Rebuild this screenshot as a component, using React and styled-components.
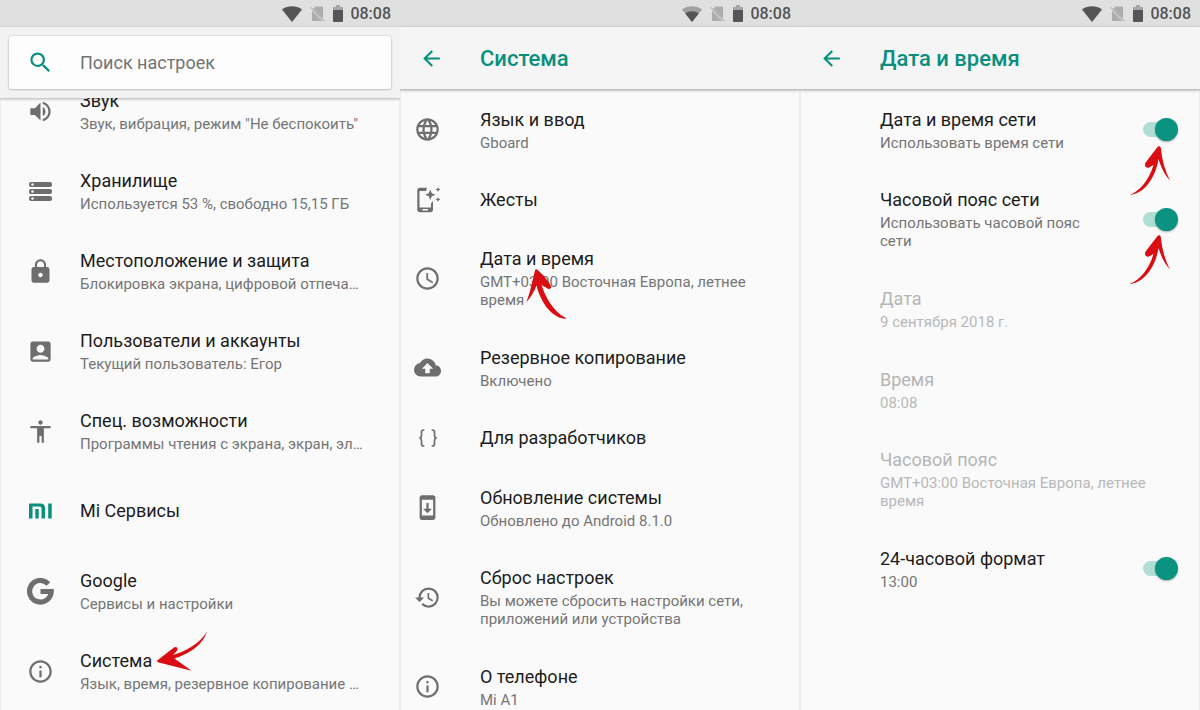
import React, { useState } from 'react';
import styled, { createGlobalStyle } from 'styled-components';
import {
  MdSearch,
  MdVolumeUp,
  MdLock,
  MdAccountBox,
  MdAccessibility,
  MdInfoOutline,
  MdArrowBack,
  MdLanguage,
  MdAccessTime,
  MdBackup,
  MdSystemUpdate,
  MdHistory,
} from 'react-icons/md';

const GlobalStyle = createGlobalStyle`
  * {
    box-sizing: border-box;
  }

  body {
    margin: 0;
    background: #fafafa;
    font-family: Roboto, "Liberation Sans", sans-serif;
  }
`;

const Screens = styled.main`
  display: grid;
  grid-template-columns: repeat(3, 1fr);
  height: 100vh;
`;

const Screen = styled.section`
  display: flex;
  flex-direction: column;
  min-width: 0;
  min-height: 0;
  overflow: hidden;
  background: #fafafa;
`;

const StatusBar = styled.div`
  display: flex;
  flex-shrink: 0;
  align-items: center;
  justify-content: flex-end;
  height: 27px;
  padding-right: 9px;
  background: #e0e0e0;
  color: #555;
`;

const StatusIcons = styled.span`
  display: flex;
  align-items: center;
  gap: 8px;
`;

const Clock = styled.time`
  margin-left: 7px;
  font-size: 16px;
  font-weight: 500;
  line-height: 27px;
`;

const SearchHeader = styled.header`
  position: relative;
  z-index: 1;
  flex-shrink: 0;
  padding: 9px;
  background: #f2f2f2;
  box-shadow: 0 1px 3px rgba(0, 0, 0, 0.3);
`;

const SearchBox = styled.label`
  display: flex;
  align-items: center;
  height: 53px;
  padding-left: 18px;
  border-radius: 2px;
  background: #fdfdfd;
  box-shadow: 0 0 2px rgba(0, 0, 0, 0.25), 0 1px 2px rgba(0, 0, 0, 0.15);
  color: #0a8f7d;
`;

const SearchInput = styled.input`
  flex: 1;
  min-width: 0;
  margin-left: 26px;
  padding: 0;
  border: none;
  outline: none;
  background: transparent;
  color: #212121;
  font-family: inherit;
  font-size: 18px;

  &::placeholder {
    color: #737373;
    opacity: 1;
  }
`;

const AppBar = styled.header`
  position: relative;
  z-index: 1;
  display: flex;
  flex-shrink: 0;
  align-items: center;
  height: 62px;
  padding-left: 19px;
  background: #f5f5f5;
  box-shadow: 0 1px 3px rgba(0, 0, 0, 0.4);
  color: #0a8f7d;
`;

const BackButton = styled.button`
  display: flex;
  width: 61px;
  padding: 0;
  border: none;
  background: none;
  color: inherit;
  cursor: pointer;
`;

const AppTitle = styled.h1`
  margin: 0;
  font-size: 22px;
  font-weight: 500;
`;

const List = styled.nav`
  flex: 1;
  min-height: 0;
  border: solid #eee;
  border-width: 0 1px;
`;

/* The main list is scrolled down a little, so its first row slides under the search header */
const ScrolledList = styled(List)`
  margin-top: -27px;
`;

const Row = styled.a`
  position: relative;
  display: flex;
  align-items: center;
  min-height: ${(props) => (props.$compact ? '59px' : props.$main ? '80px' : '81px')};
  padding: ${(props) => (props.$compact ? '0' : '18px')} 24px;
  padding-left: 0;
  color: inherit;
  text-decoration: none;
  cursor: ${(props) => (props.$static ? 'default' : 'pointer')};
`;

const RowIcon = styled.span`
  display: flex;
  flex-shrink: 0;
  justify-content: center;
  width: ${(props) => (props.$main ? '79px' : '53px')};
  margin-right: ${(props) => (props.$main ? '0' : '26px')};
  color: #6e6e6e;
`;

const RowText = styled.span`
  flex: 1;
  min-width: 0;
  padding-left: ${(props) => (props.$inset ? '79px' : '0')};
`;

const Title = styled.span`
  display: block;
  color: ${(props) => (props.$disabled ? '#b5b5b5' : '#1c1c1c')};
  font-size: 18px;
  line-height: 24px;
`;

const Summary = styled.span`
  display: block;
  overflow: hidden;
  margin-top: 2px;
  color: ${(props) => (props.$disabled ? '#b8b8b8' : '#757575')};
  font-size: 15px;
  line-height: 18px;
  text-overflow: ellipsis;
  white-space: ${(props) => (props.$singleLine ? 'nowrap' : 'normal')};
`;

const Switch = styled.input`
  position: relative;
  flex-shrink: 0;
  width: 34px;
  height: 15px;
  margin: 0 -2px 0 44px;
  border-radius: 8px;
  appearance: none;
  background: ${(props) => (props.checked ? '#b0ddd5' : '#bdbdbd')};
  cursor: pointer;

  &::before {
    content: '';
    position: absolute;
    top: -4px;
    left: ${(props) => (props.checked ? '12px' : '-1px')};
    width: 23px;
    height: 23px;
    border-radius: 50%;
    background: ${(props) => (props.checked ? '#0a9380' : '#fafafa')};
    box-shadow: 0 1px 2px rgba(0, 0, 0, 0.3);
  }
`;

const Pointer = styled.svg`
  position: absolute;
  z-index: 2;
  top: ${(props) => props.$top};
  left: ${(props) => props.$left};
  right: ${(props) => props.$right};
  fill: #d90d12;
  pointer-events: none;
`;

const WifiIcon = ({ weak }) => (
  <svg width="20" height="16" viewBox="0 0 20 16">
    <path d="M0 3.5C5.5-.9 14.5-.9 20 3.5L10 16z" fill={weak ? '#a2a2a2' : '#555'} />
    {weak && <path d="M3.3 7.6C7 4.5 13 4.5 16.7 7.6L10 16z" fill="#555" />}
  </svg>
);

const NoSimIcon = () => (
  <svg width="15" height="16" viewBox="0 0 15 16">
    <path d="M5.5.5H13v12.200L3.300 3z" fill="#adadad" />
    <path d="M2 4.500L12.500 15H2z" fill="#adadad" />
    <path d="M.8 1.300L14.500 15.200" stroke="#999" strokeWidth="1" />
  </svg>
);

const BatteryIcon = () => (
  <svg width="10" height="17" viewBox="0 0 10 17">
    <path d="M3 0h4v2h3v4H0V2h3z" fill="#a6a6a6" />
    <path d="M0 5h10v11a1 1 0 0 1-1 1H1a1 1 0 0 1-1-1z" fill="#555" />
  </svg>
);

const StorageIcon = () => (
  <svg width="23" height="19" viewBox="0 0 23 19" fill="currentColor">
    <rect y="0" width="23" height="5" rx="2" />
    <rect y="7" width="23" height="5" rx="2" />
    <rect y="14" width="23" height="5" rx="2" />
    <g fill="#fafafa">
      <circle cx="3.500" cy="2.500" r="1.200" />
      <circle cx="3.500" cy="9.500" r="1.200" />
      <circle cx="3.500" cy="16.500" r="1.200" />
    </g>
  </svg>
);

const MiIcon = () => (
  <svg width="23" height="16" viewBox="0 0 23 16" fill="#0a8f7d">
    <path d="M0 .5h11.5c3 0 4.500 1.700 4.500 4.500v10.500h-3.500V5.500c0-1.300-.7-2-2-2h-7v12H0z" />
    <path d="M6.300 6h3.400v9.500H6.300zM19.200.5h3.500v15h-3.500z" />
  </svg>
);

const GoogleIcon = () => (
  <svg width="27" height="27" viewBox="0 0 27 27" fill="none" stroke="currentColor" strokeWidth="5.200">
    <path d="M21.400 6A10.800 10.800 0 1 0 24.200 13.500H13.500" />
  </svg>
);

const GesturesIcon = () => (
  <svg width="26" height="26" viewBox="0 0 26 26" fill="currentColor">
    <path d="M12 .8H5C3.300.8 2.300 1.700 2.300 3.200v19.600c0 1.600 1 2.500 2.700 2.500h10.500c1.600 0 2.500-.9 2.500-2.500V14l-2 2.200V20.500H4.500V4h6.500zM7.500 22h5.500v1.500h-5.500z" fillRule="evenodd" />
    <path d="M15.300 2.500l1.500 3.700 3.700 1.500-3.700 1.500-1.500 3.700-1.500-3.700-3.700-1.500 3.700-1.500zM23 0l.8 1.700 1.700.8-1.700.8L23 5l-.8-1.700-1.700-.8 1.700-.8zM23 10l.8 1.700 1.700.8-1.700.8L23 15l-.8-1.700-1.700-.8 1.700-.8z" />
  </svg>
);

const BracesIcon = () => (
  <svg width="20" height="18" viewBox="0 0 20 18" fill="none" stroke="currentColor" strokeWidth="1.700">
    <path d="M6.300 1h-.8C4 1 3.500 2 3.500 3.300v3c0 1.700-.6 2.700-2.300 2.700 1.700 0 2.300 1 2.300 2.700v3c0 1.300.5 2.300 2 2.300h.8M13.700 1h.8c1.500 0 2 1 2 2.300v3c0 1.700.6 2.700 2.300 2.700-1.700 0-2.300 1-2.300 2.700v3c0 1.300-.5 2.300-2 2.300h-.8" />
  </svg>
);

const ArrowLeft = () => (
  <Pointer $top="0" $left="155px" width="54" height="42" viewBox="0 0 54 42">
    <path d="M51 .8C47 13 34 23 18.500 27.500L35.500 39.800L1.800 31.200C.8 30.900.8 29.700 1.800 29L18 16.500c2.500-1.800 4.500.8 3.200 3L17 24C31 20 44 12 51 .8z" />
  </Pointer>
);

const ArrowUpLeft = () => (
  <Pointer $top="39px" $left="124px" width="42" height="52" viewBox="0 0 42 52">
    <path d="M1 34.500C5 26 7 14 10 2.500c.3-1.400 1.400-1.700 2.400-.8C18 6.500 24 13.500 26 18c1 2.500-2 4-4 2.300L16.500 16.500C20 29 29 44 40.500 49.800c.6.4.2 1.200-.8 1C25 49 15 32 11.500 17.500 9 24 5.500 30 1 34.500z" />
  </Pointer>
);

const ArrowUp = () => (
  <Pointer $top="calc(50% + 15px)" $right="27px" width="44" height="52" viewBox="0 0 44 52">
    <path d="M1.500 50C12 46 21 35 25.500 20L20.500 22.800C17.500 23 15.800 19.800 18 17L29.500 2C30.800.6 32.500 1 32.800 3C34 15 37 26 42 35.500C36 29 33 22 30.500 14C28 31 17 49 1.500 50z" />
  </Pointer>
);

const mainItems = [
  { icon: <MdVolumeUp size={27} />, title: 'Звук', summary: 'Звук, вибрация, режим "Не беспокоить"' },
  { icon: <StorageIcon />, title: 'Хранилище', summary: 'Используется 53 %, свободно 15,15 ГБ' },
  { icon: <MdLock size={27} />, title: 'Местоположение и защита', summary: 'Блокировка экрана, цифровой отпеча…' },
  { icon: <MdAccountBox size={27} />, title: 'Пользователи и аккаунты', summary: 'Текущий пользователь: Егор' },
  { icon: <MdAccessibility size={27} />, title: 'Спец. возможности', summary: 'Программы чтения с экрана, экран, эл…' },
  { icon: <MiIcon />, title: 'Mi Сервисы' },
  { icon: <GoogleIcon />, title: 'Google', summary: 'Сервисы и настройки' },
  { icon: <MdInfoOutline size={27} />, title: 'Система', summary: 'Язык, время, резервное копирование …', pointer: <ArrowLeft /> },
];

const systemItems = [
  { icon: <MdLanguage size={27} />, title: 'Язык и ввод', summary: 'Gboard' },
  { icon: <GesturesIcon />, title: 'Жесты' },
  { icon: <MdAccessTime size={27} />, title: 'Дата и время', summary: 'GMT+03:00 Восточная Европа, летнее время', pointer: <ArrowUpLeft /> },
  { icon: <MdBackup size={27} />, title: 'Резервное копирование', summary: 'Включено' },
  { icon: <BracesIcon />, title: 'Для разработчиков' },
  { icon: <MdSystemUpdate size={27} />, title: 'Обновление системы', summary: 'Обновлено до Android 8.1.0' },
  { icon: <MdHistory size={27} />, title: 'Сброс настроек', summary: 'Вы можете сбросить настройки сети, приложений или устройства' },
  { icon: <MdInfoOutline size={27} />, title: 'О телефоне', summary: 'Mi A1' },
];

const dateItems = [
  { title: 'Дата и время сети', summary: 'Использовать время сети', toggle: true, pointer: <ArrowUp /> },
  { title: 'Часовой пояс сети', summary: 'Использовать часовой пояс сети', toggle: true, pointer: <ArrowUp /> },
  { title: 'Дата', summary: '9 сентября 2018 г.', disabled: true },
  { title: 'Время', summary: '08:08', disabled: true },
  { title: 'Часовой пояс', summary: 'GMT+03:00 Восточная Европа, летнее время', disabled: true },
  { title: '24-часовой формат', summary: '13:00', toggle: true },
];

const Status = ({ weak }) => (
  <StatusBar>
    <StatusIcons>
      <WifiIcon weak={weak} />
      <NoSimIcon />
      <BatteryIcon />
    </StatusIcons>
    <Clock>08:08</Clock>
  </StatusBar>
);

const Header = ({ title }) => (
  <AppBar>
    <BackButton type="button" aria-label="Назад">
      <MdArrowBack size={25} />
    </BackButton>
    <AppTitle>{title}</AppTitle>
  </AppBar>
);

const LinkRow = ({ item, main }) => (
  <Row href="#" $main={main} $compact={!main && !item.summary}>
    <RowIcon $main={main}>{item.icon}</RowIcon>
    <RowText>
      <Title>{item.title}</Title>
      {item.summary && <Summary $singleLine={main}>{item.summary}</Summary>}
    </RowText>
    {item.pointer}
  </Row>
);

const DateRow = ({ item }) => {
  const [checked, setChecked] = useState(true);

  return (
    <Row as={item.toggle ? 'label' : 'div'} $static={!item.toggle}>
      <RowText $inset>
        <Title $disabled={item.disabled}>{item.title}</Title>
        <Summary $disabled={item.disabled}>{item.summary}</Summary>
      </RowText>
      {item.toggle && (
        <Switch
          type="checkbox"
          role="switch"
          checked={checked}
          onChange={() => setChecked(!checked)}
        />
      )}
      {item.pointer}
    </Row>
  );
};

const App = () => {
  return (
    <>
      <GlobalStyle />
      <Screens>
        <Screen>
          <Status />
          <SearchHeader>
            <SearchBox>
              <MdSearch size={27} />
              <SearchInput type="text" placeholder="Поиск настроек" aria-label="Поиск настроек" />
            </SearchBox>
          </SearchHeader>
          <ScrolledList>
            {mainItems.map((item) => (
              <LinkRow key={item.title} item={item} main />
            ))}
          </ScrolledList>
        </Screen>

        <Screen>
          <Status weak />
          <Header title="Система" />
          <List>
            {systemItems.map((item) => (
              <LinkRow key={item.title} item={item} />
            ))}
          </List>
        </Screen>

        <Screen>
          <Status />
          <Header title="Дата и время" />
          <List as="div">
            {dateItems.map((item) => (
              <DateRow key={item.title} item={item} />
            ))}
          </List>
        </Screen>
      </Screens>
    </>
  );
};

export default App;
